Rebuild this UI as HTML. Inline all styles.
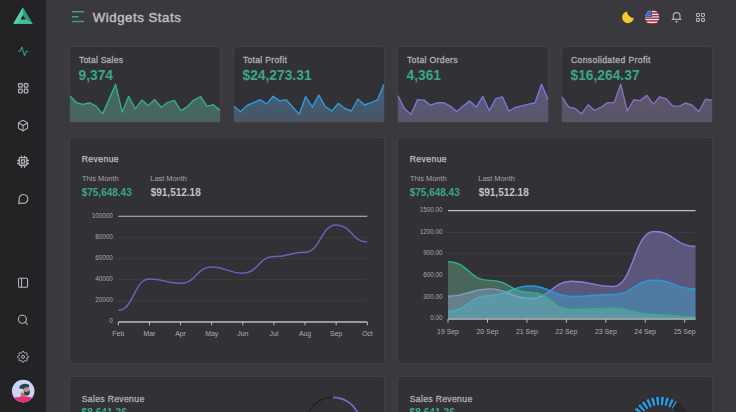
<!DOCTYPE html>
<html><head><meta charset="utf-8">
<style>
html,body{margin:0;padding:0;}
body{width:736px;height:412px;overflow:hidden;background:#3a393e;position:relative;font-family:"Liberation Sans",sans-serif;}
.abs{position:absolute;}
.side{position:absolute;left:0;top:0;width:46px;height:412px;background:#232326;}
.card{position:absolute;background:#323135;border-radius:3px;box-shadow:0 0 1.2px 0.6px rgba(255,255,255,0.045);}
.t{position:absolute;white-space:nowrap;line-height:1;}
.ct{font-size:8.6px;font-weight:normal;color:#afaeb3;-webkit-text-stroke:0.32px #afaeb3;}
.cv{font-size:13.8px;font-weight:bold;color:#3ba687;}
.rt{font-size:8.6px;color:#c3c2c7;letter-spacing:0.42px;-webkit-text-stroke:0.25px #c3c2c7;}
.sm{font-size:7.4px;color:#a6a5ab;}
.big{font-size:10px;font-weight:bold;}
svg text.ax{font-size:6.3px;fill:#a9a8ad;font-family:"Liberation Sans",sans-serif;}
svg text.ax2{font-size:6.9px;fill:#aeadb2;font-family:"Liberation Sans",sans-serif;}
</style></head><body>
<div class="side"></div>
<svg class="abs" style="left:0;top:0" width="46" height="412" viewBox="0 0 46 412"><polygon points="22.9,7.4 32.6,23.8 13.3,23.8" fill="#42b896"/><polygon points="22.9,7.4 32.6,23.8 25.6,19.6 23,15" fill="#2f9a7d"/><polygon points="22.9,7.4 23,15 20.4,19.6 18.2,23.8 13.3,23.8" fill="#50d1aa"/><polygon points="20.4,19.6 25.6,19.6 32.6,23.8 18.2,23.8" fill="#44c09b"/><polygon points="23,15 25.6,19.6 20.4,19.6" fill="#232326"/><g transform="translate(17.44 45.59) scale(0.48)" fill="none" stroke="#389f84" stroke-width="2.1" stroke-linecap="round" stroke-linejoin="round"><polyline points="22 12 18 12 15 21 9 3 6 12 2 12"/></g><g fill="none" stroke="#b3b2b7" stroke-width="1.25"><rect x="18.55" y="83.55" width="3.6" height="3.6" rx="0.7"/><rect x="24.25" y="83.55" width="3.6" height="3.6" rx="0.7"/><rect x="18.55" y="89.15" width="3.6" height="3.6" rx="0.7"/><rect x="24.25" y="89.15" width="3.6" height="3.6" rx="0.7"/></g><g transform="translate(16.88 119.43) scale(0.51)" fill="none" stroke="#b3b2b7" stroke-width="2.1" stroke-linecap="round" stroke-linejoin="round"><path d="M21 16V8a2 2 0 0 0-1-1.73l-7-4a2 2 0 0 0-2 0l-7 4A2 2 0 0 0 3 8v8a2 2 0 0 0 1 1.73l7 4a2 2 0 0 0 2 0l7-4A2 2 0 0 0 21 16z"/><polyline points="3.27 6.96 12 12.01 20.73 6.96"/><line x1="12" y1="22.08" x2="12" y2="12"/></g><g fill="none" stroke="#b3b2b7" stroke-width="1.3" stroke-linecap="round"><rect x="19.25" y="157.65" width="7.6" height="7.6" rx="0.8"/><rect x="21.45" y="159.85" width="3.2" height="3.2"/><path d="M21.5 156.2 v1.3 M24.6 156.2 v1.3 M21.5 165.4 v1.9 M24.6 165.4 v1.9 M17.7 160.5 h1.4 M17.7 163.5 h1.4 M27 160.5 h1.5 M27 163.5 h1.5"/></g><path d="M18.7 203.6 L19.25 200.1 A4.4 4.4 0 1 1 21.9 203.0 Z" fill="none" stroke="#b3b2b7" stroke-width="1.15" stroke-linejoin="round"/><g transform="translate(17.05 276.75) scale(0.5)" fill="none" stroke="#b3b2b7" stroke-width="2.2" stroke-linecap="round" stroke-linejoin="round"><rect x="3" y="3" width="18" height="18" rx="2" ry="2"/><line x1="9" y1="3" x2="9" y2="21"/></g><g transform="translate(16.9 313.8) scale(0.5)" fill="none" stroke="#b3b2b7" stroke-width="2.2" stroke-linecap="round" stroke-linejoin="round"><circle cx="11" cy="11" r="8"/><line x1="21" y1="21" x2="16.65" y2="16.65"/></g><g transform="translate(17.05 350.8) scale(0.5)" fill="none" stroke="#b3b2b7" stroke-width="2.0" stroke-linecap="round" stroke-linejoin="round"><circle cx="12" cy="12" r="3"/><path d="M19.4 15a1.65 1.65 0 0 0 .33 1.82l.06.06a2 2 0 0 1 0 2.83 2 2 0 0 1-2.83 0l-.06-.06a1.65 1.65 0 0 0-1.820-.33 1.65 1.65 0 0 0-1 1.51V21a2 2 0 0 1-2 2 2 2 0 0 1-2-2v-.09A1.65 1.65 0 0 0 9 19.4a1.65 1.65 0 0 0-1.82.33l-.06.06a2 2 0 0 1-2.83 0 2 2 0 0 1 0-2.83l.06-.06a1.65 1.65 0 0 0 .33-1.82 1.65 1.65 0 0 0-1.51-1H3a2 2 0 0 1-2-2 2 2 0 0 1 2-2h.09A1.65 1.65 0 0 0 4.6 9a1.65 1.65 0 0 0-.33-1.82l-.06-.06a2 2 0 0 1 0-2.830 2 2 0 0 1 2.83 0l.06.06a1.650 1.65 0 0 0 1.82.33H9a1.65 1.65 0 0 0 1-1.51V3a2 2 0 0 1 2-2 2 2 0 0 1 2 2v.09a1.65 1.65 0 0 0 1 1.51 1.65 1.65 0 0 0 1.82-.33l.06-.06a2 2 0 0 1 2.83 0 2 2 0 0 1 0 2.83l-.06.06a1.65 1.65 0 0 0-.33 1.82V9a1.65 1.65 0 0 0 1.51 1H21a2 2 0 0 1 2 2 2 2 0 0 1-2 2h-.09a1.65 1.65 0 0 0-1.51 1z"/></g></svg>
<!-- header -->
<svg class="abs" style="left:70px;top:8px" width="16" height="18" viewBox="70 8 16 18">
  <g stroke="#3d9f89" stroke-width="1.5"><path d="M72 11.8 H84 M72 16.8 H78.6 M72 21.6 H84"/></g>
</svg>
<div class="t" style="left:92.8px;top:10.7px;font-size:13.2px;font-weight:normal;color:#c0bfc4;letter-spacing:0.55px;-webkit-text-stroke:0.45px #c0bfc4;">Widgets Stats</div>
<svg class="abs" style="left:615px;top:5px" width="100" height="25" viewBox="615 5 100 25">
  <path d="M626.94 11.55 A5.85 5.85 0 1 0 633.8 18.09 A7.3 7.3 0 0 1 626.94 11.55 Z" fill="#f5c731"/>
  <defs><clipPath id="fc"><circle cx="652.1" cy="17.05" r="7.2"/></clipPath></defs>
  <g clip-path="url(#fc)"><rect x="644.5" y="9.850" width="15.5" height="1.31" fill="#c9283d"/><rect x="644.5" y="11.160" width="15.5" height="1.31" fill="#f4f4f8"/><rect x="644.5" y="12.470" width="15.5" height="1.31" fill="#c9283d"/><rect x="644.5" y="13.780" width="15.5" height="1.31" fill="#f4f4f8"/><rect x="644.5" y="15.090" width="15.5" height="1.31" fill="#c9283d"/><rect x="644.5" y="16.400" width="15.5" height="1.31" fill="#f4f4f8"/><rect x="644.5" y="17.710" width="15.5" height="1.31" fill="#c9283d"/><rect x="644.5" y="19.020" width="15.5" height="1.31" fill="#f4f4f8"/><rect x="644.5" y="20.330" width="15.5" height="1.31" fill="#c9283d"/><rect x="644.5" y="21.640" width="15.5" height="1.31" fill="#f4f4f8"/><rect x="644.5" y="22.950" width="15.5" height="1.31" fill="#c9283d"/>
    <rect x="644.5" y="9.85" width="7.6" height="7.2" fill="#3b5aab"/>
    <g fill="#dfe6f5"><circle cx="646.6" cy="11.6" r="0.45"/><circle cx="648.6" cy="11.6" r="0.45"/><circle cx="650.6" cy="11.6" r="0.45"/><circle cx="647.6" cy="13.4" r="0.45"/><circle cx="649.6" cy="13.4" r="0.45"/><circle cx="646.6" cy="15.2" r="0.45"/><circle cx="648.6" cy="15.2" r="0.45"/><circle cx="650.6" cy="15.2" r="0.45"/></g>
  </g>
  <g fill="none" stroke="#b3b2b7" stroke-width="1.15" stroke-linejoin="round" stroke-linecap="round">
    <path d="M673.3 19.4 V16 A3.35 3.35 0 0 1 680 16 V19.4"/>
    <path d="M672.2 19.4 H681"/>
    <path d="M675.9 21.4 L676.6 22.2 L677.3 21.4"/>
  </g>
  <g fill="none" stroke="#b3b2b7" stroke-width="1.1">
    <rect x="696.55" y="13.55" width="2.9" height="2.9" rx="0.6"/><rect x="701.55" y="13.55" width="2.9" height="2.9" rx="0.6"/>
    <rect x="696.55" y="18.45" width="2.9" height="2.9" rx="0.6"/><rect x="701.55" y="18.45" width="2.9" height="2.9" rx="0.6"/>
  </g>
</svg>
<div class="card" style="left:70px;top:47px;width:150px;height:75px;"></div>
<div class="card" style="left:234px;top:47px;width:150px;height:75px;"></div>
<div class="card" style="left:398px;top:47px;width:150px;height:75px;"></div>
<div class="card" style="left:562px;top:47px;width:150px;height:75px;"></div>
<div class="t ct" style="left:78.9px;top:55.6px;letter-spacing:0.2px;">Total Sales</div>
<div class="t cv" style="left:78.5px;top:68.5px;">9,374</div>
<div class="t ct" style="left:242.9px;top:55.6px;letter-spacing:0.3px;">Total Profit</div>
<div class="t cv" style="left:242.5px;top:68.5px;">$24,273.31</div>
<div class="t ct" style="left:406.9px;top:55.6px;letter-spacing:0.35px;">Total Orders</div>
<div class="t cv" style="left:406.5px;top:68.5px;">4,361</div>
<div class="t ct" style="left:570.9px;top:55.6px;letter-spacing:0.38px;">Consolidated Profit</div>
<div class="t cv" style="left:570.5px;top:68.5px;">$16,264.37</div>
<div class="card" style="left:70px;top:138px;width:314px;height:224.5px;"></div>
<div class="t rt" style="left:81.7px;top:155px;">Revenue</div>
<div class="t sm" style="left:82px;top:174.6px;">This Month</div>
<div class="t big" style="left:81.7px;top:187.6px;color:#3ba687;">$75,648.43</div>
<div class="t sm" style="left:150.3px;top:174.6px;">Last Month</div>
<div class="t big" style="left:150.7px;top:187.6px;color:#c4c3c8;">$91,512.18</div>
<div class="card" style="left:398px;top:138px;width:314px;height:224.5px;"></div>
<div class="t rt" style="left:409.7px;top:155px;">Revenue</div>
<div class="t sm" style="left:410px;top:174.6px;">This Month</div>
<div class="t big" style="left:409.7px;top:187.6px;color:#3ba687;">$75,648.43</div>
<div class="t sm" style="left:478.3px;top:174.6px;">Last Month</div>
<div class="t big" style="left:478.7px;top:187.6px;color:#c4c3c8;">$91,512.18</div>
<div class="card" style="left:70px;top:377px;width:314px;height:60px;"></div>
<div class="t ct" style="left:81.7px;top:395.4px;font-size:8.7px;letter-spacing:0.3px;">Sales Revenue</div>
<div class="t cv" style="left:81.5px;top:407.9px;font-size:10.2px;">$8,641.26</div>
<div class="card" style="left:398px;top:377px;width:314px;height:60px;"></div>
<div class="t ct" style="left:409.7px;top:395.4px;font-size:8.7px;letter-spacing:0.3px;">Sales Revenue</div>
<div class="t cv" style="left:409.5px;top:407.9px;font-size:10.2px;">$8,641.26</div>
<svg class="abs" style="left:0;top:0" width="736" height="412" viewBox="0 0 736 412"><linearGradient id="sg0" gradientUnits="userSpaceOnUse" x1="0" y1="84" x2="0" y2="122"><stop offset="0" stop-color="#3e6e60"/><stop offset="1" stop-color="#4b6360"/></linearGradient><path d="M70 96.1 L76.52 102.8 L83.04 104.5 L89.57 102.8 L96.09 106.1 L102.61 113.9 L109.13 99.1 L115.65 84.3 L122.17 112.1 L128.7 96.3 L135.22 108.8 L141.74 100.1 L148.26 105.5 L154.78 99.6 L161.3 107.2 L167.83 102.3 L174.35 100.4 L180.87 110.7 L187.39 106.6 L193.91 100.1 L200.43 96.5 L206.96 106.1 L213.48 104.8 L220 110.4 L220 122 L70 122 Z" fill="url(#sg0)"/><path d="M70 96.1 L76.52 102.8 L83.04 104.5 L89.57 102.8 L96.09 106.1 L102.61 113.9 L109.13 99.1 L115.65 84.3 L122.17 112.1 L128.7 96.3 L135.22 108.8 L141.74 100.1 L148.26 105.5 L154.78 99.6 L161.3 107.2 L167.83 102.3 L174.35 100.4 L180.87 110.7 L187.39 106.6 L193.91 100.1 L200.43 96.5 L206.96 106.1 L213.48 104.8 L220 110.4" fill="none" stroke="#3aa98a" stroke-width="1.4" stroke-linejoin="round"/><linearGradient id="sg1" gradientUnits="userSpaceOnUse" x1="0" y1="84" x2="0" y2="122"><stop offset="0" stop-color="#3d6283"/><stop offset="1" stop-color="#4a5563"/></linearGradient><path d="M234 106.3 L240.52 111.7 L247.04 105.5 L253.57 102.6 L260.09 99.6 L266.61 103.9 L273.13 96.3 L279.65 100.9 L286.17 99.6 L292.7 107 L299.22 114.2 L305.74 96.5 L312.26 107.2 L318.78 95.2 L325.3 106.6 L331.83 111 L338.35 103.4 L344.87 108.5 L351.39 111 L357.91 99 L364.43 105 L370.96 102.6 L377.48 99.8 L384 84.3 L384 122 L234 122 Z" fill="url(#sg1)"/><path d="M234 106.3 L240.52 111.7 L247.04 105.5 L253.57 102.6 L260.09 99.6 L266.61 103.9 L273.13 96.3 L279.65 100.9 L286.17 99.6 L292.7 107 L299.22 114.2 L305.74 96.5 L312.26 107.2 L318.78 95.2 L325.3 106.6 L331.83 111 L338.35 103.4 L344.87 108.5 L351.39 111 L357.91 99 L364.43 105 L370.96 102.6 L377.48 99.8 L384 84.3" fill="none" stroke="#2e9bd6" stroke-width="1.4" stroke-linejoin="round"/><linearGradient id="sg2" gradientUnits="userSpaceOnUse" x1="0" y1="84" x2="0" y2="122"><stop offset="0" stop-color="#5c5882"/><stop offset="1" stop-color="#575769"/></linearGradient><path d="M398 95.8 L404.52 108.8 L411.04 114.2 L417.57 99.6 L424.09 100.1 L430.61 105.2 L437.13 102.8 L443.65 102.6 L450.17 106.1 L456.7 111.5 L463.22 106.1 L469.74 100.9 L476.26 107.2 L482.78 96.3 L489.3 110.7 L495.83 98.7 L502.35 96.8 L508.87 111 L515.39 107.4 L521.91 105.9 L528.43 104.1 L534.96 103 L541.48 84.3 L548 99 L548 122 L398 122 Z" fill="url(#sg2)"/><path d="M398 95.8 L404.52 108.8 L411.04 114.2 L417.57 99.6 L424.09 100.1 L430.61 105.2 L437.13 102.8 L443.65 102.6 L450.17 106.1 L456.7 111.5 L463.22 106.1 L469.74 100.9 L476.26 107.2 L482.78 96.3 L489.3 110.7 L495.83 98.7 L502.35 96.8 L508.87 111 L515.39 107.4 L521.91 105.9 L528.43 104.1 L534.96 103 L541.48 84.3 L548 99" fill="none" stroke="#7a75d6" stroke-width="1.4" stroke-linejoin="round"/><linearGradient id="sg3" gradientUnits="userSpaceOnUse" x1="0" y1="84" x2="0" y2="122"><stop offset="0" stop-color="#5d5470"/><stop offset="1" stop-color="#585565"/></linearGradient><path d="M562 96.8 L568.52 107 L575.04 108.5 L581.57 113.9 L588.09 104.8 L594.61 110.4 L601.13 107.2 L607.65 102.6 L614.17 102.6 L620.7 84.3 L627.22 111 L633.74 99.8 L640.26 100.6 L646.78 95.4 L653.3 104.1 L659.83 96.8 L666.35 99 L672.87 106.1 L679.39 106.1 L685.91 103 L692.43 105.5 L698.96 111.7 L705.48 99.3 L712 100.1 L712 122 L562 122 Z" fill="url(#sg3)"/><path d="M562 96.8 L568.52 107 L575.04 108.5 L581.57 113.9 L588.09 104.8 L594.61 110.4 L601.13 107.2 L607.65 102.6 L614.17 102.6 L620.7 84.3 L627.22 111 L633.74 99.8 L640.26 100.6 L646.78 95.4 L653.3 104.1 L659.83 96.8 L666.35 99 L672.87 106.1 L679.39 106.1 L685.91 103 L692.43 105.5 L698.96 111.7 L705.48 99.3 L712 100.1" fill="none" stroke="#8670bd" stroke-width="1.4" stroke-linejoin="round"/><line x1="118.3" y1="216.3" x2="367.3" y2="216.3" stroke="#c2c1c6" stroke-width="1.05"/><text x="112.8" y="217.5" class="ax" text-anchor="end">100000</text><line x1="118.3" y1="237.44" x2="367.3" y2="237.44" stroke="#403f45" stroke-width="0.8"/><text x="112.8" y="238.64" class="ax" text-anchor="end">80000</text><line x1="118.3" y1="258.58" x2="367.3" y2="258.58" stroke="#403f45" stroke-width="0.8"/><text x="112.8" y="259.78" class="ax" text-anchor="end">60000</text><line x1="118.3" y1="279.72" x2="367.3" y2="279.72" stroke="#403f45" stroke-width="0.8"/><text x="112.8" y="280.92" class="ax" text-anchor="end">40000</text><line x1="118.3" y1="300.86" x2="367.3" y2="300.86" stroke="#403f45" stroke-width="0.8"/><text x="112.8" y="302.06" class="ax" text-anchor="end">20000</text><text x="112.8" y="323.2" class="ax" text-anchor="end">0</text><line x1="118.3" y1="322" x2="367.3" y2="322" stroke="#bdbcc1" stroke-width="1.4"/><line x1="118.3" y1="322" x2="118.3" y2="325.4" stroke="#bdbcc1" stroke-width="1"/><text x="118.3" y="336" class="ax2" text-anchor="middle">Feb</text><line x1="149.43" y1="322" x2="149.43" y2="325.4" stroke="#bdbcc1" stroke-width="1"/><text x="149.43" y="336" class="ax2" text-anchor="middle">Mar</text><line x1="180.55" y1="322" x2="180.55" y2="325.4" stroke="#bdbcc1" stroke-width="1"/><text x="180.55" y="336" class="ax2" text-anchor="middle">Apr</text><line x1="211.68" y1="322" x2="211.68" y2="325.4" stroke="#bdbcc1" stroke-width="1"/><text x="211.68" y="336" class="ax2" text-anchor="middle">May</text><line x1="242.8" y1="322" x2="242.8" y2="325.4" stroke="#bdbcc1" stroke-width="1"/><text x="242.8" y="336" class="ax2" text-anchor="middle">Jun</text><line x1="273.93" y1="322" x2="273.93" y2="325.4" stroke="#bdbcc1" stroke-width="1"/><text x="273.93" y="336" class="ax2" text-anchor="middle">Jul</text><line x1="305.05" y1="322" x2="305.05" y2="325.4" stroke="#bdbcc1" stroke-width="1"/><text x="305.05" y="336" class="ax2" text-anchor="middle">Aug</text><line x1="336.18" y1="322" x2="336.18" y2="325.4" stroke="#bdbcc1" stroke-width="1"/><text x="336.18" y="336" class="ax2" text-anchor="middle">Sep</text><line x1="367.3" y1="322" x2="367.3" y2="325.4" stroke="#bdbcc1" stroke-width="1"/><text x="367.3" y="336" class="ax2" text-anchor="middle">Oct</text><path d="M118.3 310.3 C133.86 310.3 133.86 279 149.43 279 C164.99 279 164.99 283.3 180.55 283.3 C196.11 283.3 196.11 267.1 211.68 267.1 C227.24 267.1 227.24 273.2 242.8 273.2 C258.36 273.2 258.36 256.6 273.93 256.6 C289.49 256.6 289.49 252.3 305.05 252.3 C320.61 252.3 320.61 225.1 336.18 225.1 C351.74 225.1 351.74 242 367.3 242" fill="none" stroke="#6664b8" stroke-width="1.5"/><line x1="448" y1="210.6" x2="695.5" y2="210.6" stroke="#c2c1c6" stroke-width="1.05"/><text x="442.4" y="211.8" class="ax" text-anchor="end">1500.00</text><line x1="448" y1="232.3" x2="695.5" y2="232.3" stroke="#403f45" stroke-width="0.8"/><text x="442.4" y="233.5" class="ax" text-anchor="end">1200.00</text><line x1="448" y1="254" x2="695.5" y2="254" stroke="#403f45" stroke-width="0.8"/><text x="442.4" y="255.2" class="ax" text-anchor="end">900.00</text><line x1="448" y1="275.7" x2="695.5" y2="275.7" stroke="#403f45" stroke-width="0.8"/><text x="442.4" y="276.9" class="ax" text-anchor="end">600.00</text><line x1="448" y1="297.4" x2="695.5" y2="297.4" stroke="#403f45" stroke-width="0.8"/><text x="442.4" y="298.6" class="ax" text-anchor="end">300.00</text><text x="442.4" y="320.3" class="ax" text-anchor="end">0.00</text><path d="M448 296.2 C468.62 296.2 468.62 288.9 489.25 288.9 C509.88 288.9 509.88 298.6 530.5 298.6 C551.12 298.6 551.12 281.3 571.75 281.3 C592.38 281.3 592.38 286.5 613 286.5 C633.62 286.5 633.62 231.5 654.25 231.5 C674.88 231.5 674.88 246.5 695.5 246.5 L695.5 319.1 L448 319.1 Z" fill="rgb(132,126,196)" fill-opacity="0.49"/><path d="M448 296.2 C468.62 296.2 468.62 288.9 489.25 288.9 C509.88 288.9 509.88 298.6 530.5 298.6 C551.12 298.6 551.12 281.3 571.75 281.3 C592.38 281.3 592.38 286.5 613 286.5 C633.62 286.5 633.62 231.5 654.25 231.5 C674.88 231.5 674.88 246.5 695.5 246.5" fill="none" stroke="#8582dc" stroke-width="1.4"/><path d="M448 311.2 C468.62 311.2 468.62 295.5 489.25 295.5 C509.88 295.5 509.88 286 530.5 286 C551.12 286 551.12 296.4 571.75 296.4 C592.38 296.4 592.38 294.5 613 294.5 C633.62 294.5 633.62 280.3 654.25 280.3 C674.88 280.3 674.88 289.1 695.5 289.1 L695.5 319.1 L448 319.1 Z" fill="rgb(70,163,209)" fill-opacity="0.46"/><path d="M448 311.2 C468.62 311.2 468.62 295.5 489.25 295.5 C509.88 295.5 509.88 286 530.5 286 C551.12 286 551.12 296.4 571.75 296.4 C592.38 296.4 592.38 294.5 613 294.5 C633.62 294.5 633.62 280.3 654.25 280.3 C674.88 280.3 674.88 289.1 695.5 289.1" fill="none" stroke="#2b98d8" stroke-width="1.4"/><path d="M448 261.8 C468.62 261.8 468.62 280.4 489.25 280.4 C509.88 280.4 509.88 292.4 530.5 292.4 C551.12 292.4 551.12 309.4 571.75 309.4 C592.38 309.4 592.38 308.2 613 308.2 C633.62 308.2 633.62 314.6 654.25 314.6 C674.88 314.6 674.88 317 695.5 317 L695.5 319.1 L448 319.1 Z" fill="rgb(123,216,168)" fill-opacity="0.32"/><path d="M448 261.8 C468.62 261.8 468.62 280.4 489.25 280.4 C509.88 280.4 509.88 292.4 530.5 292.4 C551.12 292.4 551.12 309.4 571.75 309.4 C592.38 309.4 592.38 308.2 613 308.2 C633.62 308.2 633.62 314.6 654.25 314.6 C674.88 314.6 674.88 317 695.5 317" fill="none" stroke="#2fb088" stroke-width="1.4"/><line x1="448" y1="319.1" x2="695.5" y2="319.1" stroke="#bdbcc1" stroke-width="1.4"/><line x1="448" y1="319.1" x2="448" y2="322.7" stroke="#bdbcc1" stroke-width="1"/><text x="448" y="334" class="ax2" text-anchor="middle">19 Sep</text><line x1="487.45" y1="319.1" x2="487.45" y2="322.7" stroke="#bdbcc1" stroke-width="1"/><text x="487.45" y="334" class="ax2" text-anchor="middle">20 Sep</text><line x1="526.9" y1="319.1" x2="526.9" y2="322.7" stroke="#bdbcc1" stroke-width="1"/><text x="526.9" y="334" class="ax2" text-anchor="middle">21 Sep</text><line x1="566.35" y1="319.1" x2="566.35" y2="322.7" stroke="#bdbcc1" stroke-width="1"/><text x="566.35" y="334" class="ax2" text-anchor="middle">22 Sep</text><line x1="605.8" y1="319.1" x2="605.8" y2="322.7" stroke="#bdbcc1" stroke-width="1"/><text x="605.8" y="334" class="ax2" text-anchor="middle">23 Sep</text><line x1="645.25" y1="319.1" x2="645.25" y2="322.7" stroke="#bdbcc1" stroke-width="1"/><text x="645.25" y="334" class="ax2" text-anchor="middle">24 Sep</text><line x1="684.7" y1="319.1" x2="684.7" y2="322.7" stroke="#bdbcc1" stroke-width="1"/><text x="684.7" y="334" class="ax2" text-anchor="middle">25 Sep</text><circle cx="333" cy="424.5" r="27.2" fill="none" stroke="#232226" stroke-width="1.6"/><path d="M333 397.3 A27.2 27.2 0 0 1 356.56 438.1" fill="none" stroke="#7d6bc8" stroke-width="1.8"/><path d="M642.64 448.68 A27 27 0 1 1 677.36 448.68" fill="none" stroke="#27262a" stroke-width="8.3"/><path d="M636.62 441.5 A27 27 0 0 1 674.71 405.36" fill="none" stroke="#2b9ad8" stroke-width="8.3" stroke-dasharray="2.5 1.9"/></svg>
<svg class="abs" style="left:11px;top:379px" width="24" height="24" viewBox="0 0 24 24">
  <defs><clipPath id="av"><circle cx="12.2" cy="12.1" r="11.3"/></clipPath></defs>
  <circle cx="12.2" cy="12.1" r="11.3" fill="#cdd3f4"/>
  <g clip-path="url(#av)">
    <path d="M10 13.6 L14.2 14.3 L14.6 18.6 L9.6 18.6 Z" fill="#c6704e"/>
    <path d="M0 24 L0.5 19.6 Q6 17.4 10.3 17.7 Q12.5 18.4 14.8 17.6 Q20 17.8 24 19.8 L24 24 Z" fill="#e4307b"/>
    <ellipse cx="15.6" cy="11.6" rx="3.1" ry="4" fill="#d28a68"/>
    <path d="M12.9 12.2 Q14.5 13.3 16.5 12.8 Q18 12.5 18.9 11.6 L18.8 14.2 Q18.3 16.5 15.8 16.7 Q13.6 16.6 13.1 14.6 Z" fill="#1c4a5c"/>
    <path d="M8.3 8.5 Q8.3 6.2 10.5 5.8 Q12.5 4.6 15.5 4.9 Q18.4 5.1 18.2 6.9 Q18 8 16.9 8.4 Q15 8 13.6 8.7 L12.9 10.6 Q11.6 9.5 10.1 9.7 Q8.4 9.8 8.3 8.5 Z" fill="#1c4a5c"/>
    <circle cx="16.6" cy="10.6" r="1.2" fill="none" stroke="#9fb6bd" stroke-width="0.5"/>
  </g>
</svg>
</body></html>
